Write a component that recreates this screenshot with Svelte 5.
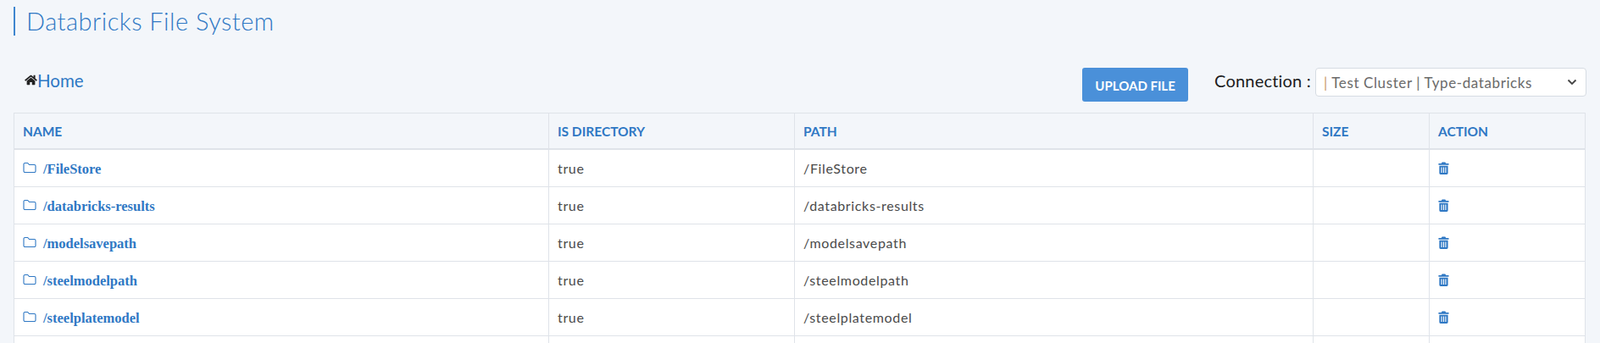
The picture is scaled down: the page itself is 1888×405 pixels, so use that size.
<script>
	const rows = ['/FileStore', '/databricks-results', '/modelsavepath', '/steelmodelpath', '/steelplatemodel'];
</script>

<div class="page">
	<h1 class="title">Databricks File System</h1>

	<div class="toolbar">
		<a class="crumb" href="#home">
			<svg class="home" viewBox="0 0 576 512" aria-hidden="true"><path d="M280 148 96 300v164c0 9 7 16 16 16l112-.3c9 0 16-7 16-16V368c0-9 7-16 16-16h64c9 0 16 7 16 16v95.600c0 9 7 16 16 16l112 .4c9 0 16-7 16-16V300L296 148c-4-3-12-3-16 0zM572 251l-84-69V44c0-7-5-12-12-12h-56c-7 0-12 5-12 12v72l-89-74c-18-14-43-14-61 0L4 251c-5 4-6 12-2 17l26 31c4 5 12 6 17 2L280 107c4-3 12-3 16 0l235 194c5 4 13 3 17-2l26-31c4-5 3-13-2-17z"/></svg>Home
		</a>
		<button class="upload">UPLOAD FILE</button>
		<span class="conn-label">Connection :</span>
		<div class="select">
			<span><i>|</i> Test Cluster | Type-databricks</span>
			<svg viewBox="0 0 12 8" aria-hidden="true"><path d="M1.500 1.500 6 6l4.500-4.500" fill="none" stroke="#444" stroke-width="1.800"/></svg>
		</div>
	</div>

	<table>
		<colgroup>
			<col style="width:631px" /><col style="width:290px" /><col style="width:612px" /><col style="width:137px" /><col />
		</colgroup>
		<thead>
			<tr><th>NAME</th><th>IS DIRECTORY</th><th>PATH</th><th>SIZE</th><th>ACTION</th></tr>
		</thead>
		<tbody>
			{#each rows as path}
				<tr>
					<td>
						<div class="name">
							<svg class="folder" viewBox="0 0 16 14" aria-hidden="true"><path d="M1 3a1.500 1.500 0 0 1 1.500-1.500h3.200L7.500 3.500h6A1.500 1.500 0 0 1 15 5v6a1.500 1.500 0 0 1-1.500 1.500h-11A1.500 1.500 0 0 1 1 11z" fill="none" stroke="#2f78c4" stroke-width="1.100"/></svg>
							<a href="#dir">{path}</a>
						</div>
					</td>
					<td><span class="cell">true</span></td>
					<td><span class="cell">{path}</span></td>
					<td></td>
					<td>
						<svg class="trash" viewBox="0 0 14 16" aria-hidden="true"><path fill="#2f78c4" fill-rule="evenodd" d="M5 .5h4l1 1.500h3.500v2H.5V2H4zM1.500 5h11v9.500a1.500 1.500 0 0 1-1.500 1.500H3a1.500 1.500 0 0 1-1.500-1.500zM3.800 7v7h1.200V7zm2.600 0v7h1.200V7zm2.600 0v7h1.200V7z"/></svg>
					</td>
				</tr>
			{/each}
			<!-- next row starts below the fold -->
			<tr><td></td><td></td><td></td><td></td><td></td></tr>
		</tbody>
	</table>
</div>

<style>
	:global(body) {
		background: #f3f6fa;
		font-family: 'Lato', 'Liberation Sans', sans-serif;
	}
	.page {
		height: 405px;
		overflow: hidden;
		padding: 8px 17px 0 16px;
		box-sizing: border-box;
	}
	.title {
		margin: 0;
		height: 34px;
		line-height: 33px;
		padding-left: 13px;
		border-left: 2px solid #3f86cf;
		font-size: 29px;
		font-weight: 300;
		color: #2f78c4;
		letter-spacing: 0.5px;
	}
	.toolbar {
		display: flex;
		align-items: center;
		height: 59px;
		margin-top: 32px;
		padding-bottom: 6px;
		box-sizing: border-box;
	}
	.crumb {
		display: flex;
		align-items: center;
		margin-left: 13px;
		margin-right: auto;
		margin-top: -12px;
		font-size: 20.5px;
		font-weight: 400;
		color: #2f78c4;
		text-decoration: none;
	}
	.home {
		width: 15px;
		height: 13px;
		fill: #222;
	}
	.upload {
		width: 125px;
		height: 40px;
		border: 0;
		border-radius: 3px;
		background: #4a90d9;
		color: #fff;
		font-family: inherit;
		font-size: 15px;
		font-weight: 700;
		margin-right: 31px;
		margin-top: -1px;
		padding-top: 2px;
	}
	.conn-label {
		font-size: 20px;
		color: #1c1c1c;
		margin-right: 5px;
		margin-top: -11px;
		letter-spacing: 0.2px;
	}
	.select {
		display: flex;
		align-items: center;
		justify-content: space-between;
		width: 320px;
		height: 34px;
		box-sizing: border-box;
		padding: 0 10px 0 9px;
		background: #fff;
		border: 1px solid #d6dce3;
		border-radius: 4px;
		font-size: 17px;
		letter-spacing: 0.6px;
		font-weight: 400;
		color: #6a6a6a;
		margin-top: -7px;
		margin-right: -1px;
	}
	.select i {
		font-style: normal;
		color: #c79a6a;
	}
	.select svg {
		width: 12px;
		height: 8px;
	}
	table {
		width: 100%;
		table-layout: fixed;
		border-collapse: collapse;
		background: #fff;
	}
	th,
	td {
		border: 1px solid #dfe3e9;
		padding: 0 9px;
		text-align: left;
		font-size: 15px;
	}
	th {
		height: 41px;
		background: #f3f6fa;
		border-bottom: 2px solid #dfe3e9;
		color: #2f78c4;
		font-size: 15.5px;
		font-weight: 700;
		padding-left: 10px;
	}
	td {
		height: 43px;
		color: #4a4a4a;
		font-weight: 400;
	}
	.cell {
		font-size: 16px;
		letter-spacing: 0.65px;
		padding-left: 1px;
	}
	.name {
		display: flex;
		align-items: center;
		gap: 8px;
		padding-top: 2px;
	}
	.name a {
		font-family: 'Liberation Serif', serif;
		font-weight: 700;
		font-size: 16.5px;
		color: #2f78c4;
		text-decoration: none;
	}
	.folder {
		width: 16px;
		height: 14px;
		margin-top: -3px;
		margin-left: 1px;
	}
	.trash {
		display: block;
		width: 13px;
		height: 15px;
		margin-top: -1px;
		margin-left: 1px;
	}
</style>
